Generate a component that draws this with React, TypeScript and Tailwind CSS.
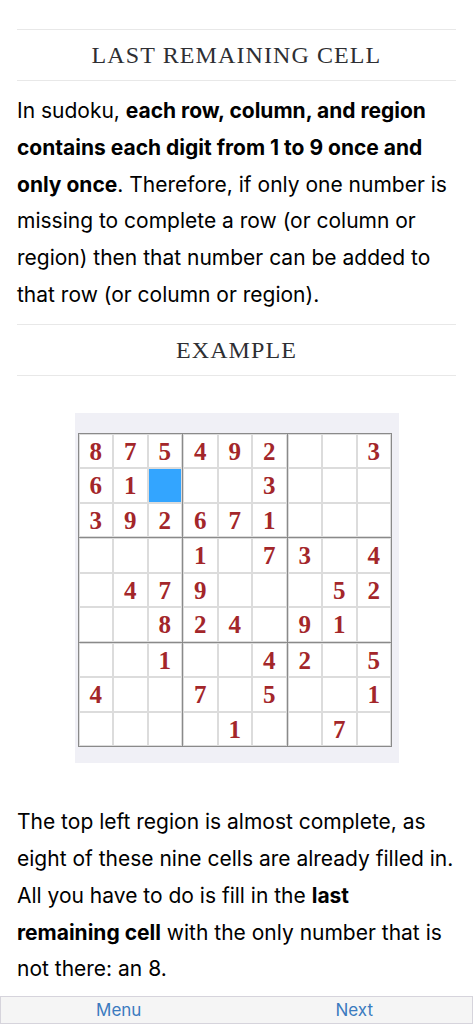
import React from 'react';

// 0 = empty cell, -1 = highlighted (the last remaining cell)
const PUZZLE: number[][] = [
  [8, 7, 5, 4, 9, 2, 0, 0, 3],
  [6, 1, -1, 0, 0, 3, 0, 0, 0],
  [3, 9, 2, 6, 7, 1, 0, 0, 0],
  [0, 0, 0, 1, 0, 7, 3, 0, 4],
  [0, 4, 7, 9, 0, 0, 0, 5, 2],
  [0, 0, 8, 2, 4, 0, 9, 1, 0],
  [0, 0, 1, 0, 0, 4, 2, 0, 5],
  [4, 0, 0, 7, 0, 5, 0, 0, 1],
  [0, 0, 0, 0, 1, 0, 0, 7, 0],
];

function Heading({ children }: { children: React.ReactNode }) {
  return (
    <h2
      className="mx-[17px] border-y border-[#e8e8e8] py-[10px] text-center text-[24px] leading-[30px] tracking-[1.1px] text-[#2e2f33]"
      style={{ fontFamily: '"Liberation Serif", "DejaVu Serif", serif' }}
    >
      {children}
    </h2>
  );
}

function Region({ r0, c0 }: { r0: number; c0: number }) {
  const cells = [];
  for (let r = r0; r < r0 + 3; r++) {
    for (let c = c0; c < c0 + 3; c++) {
      const v = PUZZLE[r][c];
      cells.push(
        <div
          key={`${r}-${c}`}
          className={
            'flex h-[34.5px] w-[34.5px] items-center justify-center border border-[#dcdcdc] text-[25px] font-bold leading-none text-[#a3262a] ' +
            (v === -1 ? 'bg-[#33a5ff]' : 'bg-white')
          }
          style={{ fontFamily: '"Liberation Serif", "Times New Roman", serif' }}
        >
          {v > 0 ? v : ''}
        </div>
      );
    }
  }
  return <div className="grid grid-cols-3">{cells}</div>;
}

function Board() {
  return (
    <div className="mx-auto w-[324px] bg-[#f0f0f6] pb-4 pl-[3px] pt-5">
      <div className="grid w-max grid-cols-3 gap-px border border-[#8a8a8a] bg-[#8a8a8a]">
        {[0, 3, 6].map((r) =>
          [0, 3, 6].map((c) => <Region key={`${r}${c}`} r0={r} c0={c} />)
        )}
      </div>
    </div>
  );
}

export default function App() {
  return (
    <div
      className="min-h-screen bg-white pb-[40px] pt-[29px] text-black"
      style={{ fontFamily: 'Inter, "Noto Sans", "Liberation Sans", sans-serif' }}
    >
      <Heading>LAST REMAINING CELL</Heading>
      <p className="mx-[17px] mb-[10px] mt-[12px] text-[21px] leading-[36.8px]">
        In sudoku, <b>each row, column, and region contains each digit from 1 to 9 once and only once</b>. Therefore, if
        only one number is missing to complete a row (or column or region) then that number can be added to that row (or
        column or region).
      </p>
      <Heading>EXAMPLE</Heading>
      <div className="mt-[37px]">
        <Board />
      </div>
      <p className="mx-[17px] mt-[41px] text-[21px] leading-[36.8px]">
        The top left region is almost complete, as eight of these nine cells are already filled in. All you have to do is
        fill in the <b>last remaining cell</b> with the only number that is not there: an 8.
      </p>

      <nav className="fixed inset-x-0 bottom-0 flex h-[28px] border border-[#d6d4dc] bg-[#f5f5f5] text-[17px] leading-[26px] text-[#3b7bbf]">
        <a className="flex-1 text-center">Menu</a>
        <a className="flex-1 text-center">Next</a>
      </nav>
    </div>
  );
}
